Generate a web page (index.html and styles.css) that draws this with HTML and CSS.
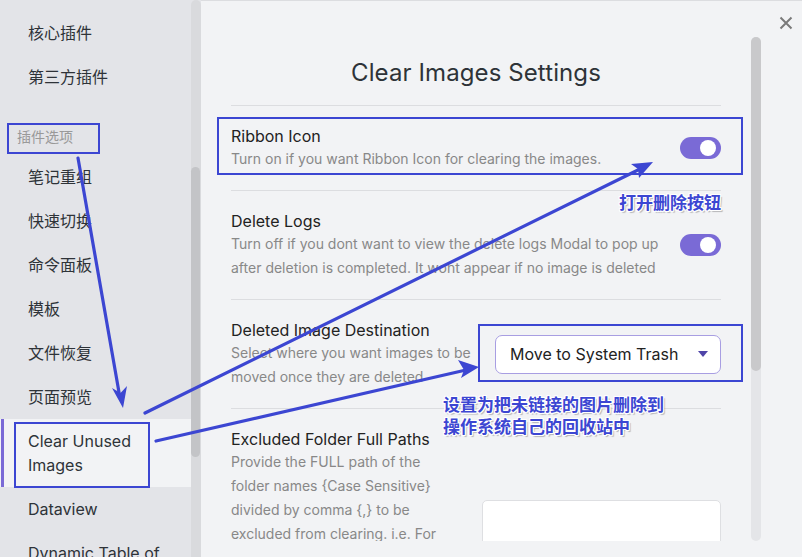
FILE: index.html
```html
<!DOCTYPE html>
<html lang="zh">
<head>
<meta charset="utf-8">
<title>Clear Images Settings</title>
<link rel="stylesheet" href="styles.css">
</head>
<body>
<div class="modal">
  <nav class="sidebar">
    <div class="nav-list">
      <div class="nav-item">核心插件</div>
      <div class="nav-item">第三方插件</div>
      <div class="nav-heading">插件选项</div>
      <div class="nav-item">笔记重组</div>
      <div class="nav-item">快速切换</div>
      <div class="nav-item">命令面板</div>
      <div class="nav-item">模板</div>
      <div class="nav-item">文件恢复</div>
      <div class="nav-item">页面预览</div>
      <div class="nav-item is-active">Clear Unused<br>Images</div>
      <div class="nav-item">Dataview</div>
      <div class="nav-item">Dynamic Table of</div>
    </div>
    <div class="side-track"><div class="side-thumb"></div></div>
  </nav>

  <main class="content">
    <div class="settings">
      <h2 class="title">Clear Images Settings</h2>

      <div class="setting-item">
        <div class="info">
          <div class="name">Ribbon Icon</div>
          <div class="desc">Turn on if you want Ribbon Icon for clearing the images.</div>
        </div>
        <div class="control"><div class="toggle"><span class="knob"></span></div></div>
      </div>

      <div class="setting-item">
        <div class="info">
          <div class="name">Delete Logs</div>
          <div class="desc">Turn off if you dont want to view the delete logs Modal to pop up after deletion is completed. It wont appear if no image is deleted</div>
        </div>
        <div class="control"><div class="toggle"><span class="knob"></span></div></div>
      </div>

      <div class="setting-item">
        <div class="info">
          <div class="name">Deleted Image Destination</div>
          <div class="desc">Select where you want images to be moved once they are deleted</div>
        </div>
        <div class="control">
          <div class="dropdown">
            <span>Move to System Trash</span>
            <span class="caret"></span>
          </div>
        </div>
      </div>

      <div class="setting-item item-textarea">
        <div class="info">
          <div class="name">Excluded Folder Full Paths</div>
          <div class="desc">Provide the FULL path of the folder names {Case Sensitive} divided by comma {,} to be excluded from clearing. i.e. For images under Personal/Files/Zodiac, Personal/Files/Zodiac should be used for exclusion</div>
        </div>
        <div class="control"><div class="textarea"></div></div>
      </div>
    </div>
    <div class="main-track"><div class="main-thumb"></div></div>
    <div class="close">
      <svg width="14" height="14" viewBox="0 0 14 14"><path d="M1.5 1.5L12.5 12.5M12.5 1.5L1.5 12.5" stroke="#7a7a7a" stroke-width="2" fill="none"/></svg>
    </div>
  </main>

  <div class="annotations">
    <div class="mark mark-heading"></div>
    <div class="mark mark-item"></div>
    <div class="mark mark-ribbon"></div>
    <div class="mark mark-dropdown"></div>
    <svg class="arrows" width="802" height="557" viewBox="0 0 802 557">
      <g stroke="#3c46d2" stroke-width="3.2" stroke-linecap="round" fill="none">
        <path d="M78 158L120 398"/>
        <path d="M145 413L640 169"/>
        <path d="M156 441L466 370"/>
      </g>
      <g fill="#3c46d2">
        <path d="M123 408L112 388L120.5 393L127 386Z"/>
        <path d="M653 162L631 164L638 169L639 178Z"/>
        <path d="M479 367L458 360L464 370L461 378Z"/>
      </g>
    </svg>
    <div class="label label-1">打开删除按钮</div>
    <div class="label label-2">设置为把未链接的图片删除到<br>操作系统自己的回收站中</div>
  </div>
</div>
</body>
</html>
```

FILE: styles.css
```css
* { box-sizing: border-box; }
html, body { margin: 0; padding: 0; }
body {
  width: 802px;
  height: 557px;
  overflow: hidden;
  font-family: Inter, "Noto Sans CJK SC", sans-serif;
  background: #f2f3f5;
  color: #2e3338;
}
.modal {
  position: relative;
  display: flex;
  width: 802px;
  height: 557px;
}

/* sidebar */
.sidebar {
  display: flex;
  width: 201px;
  height: 557px;
  background: #e3e4e8;
  flex: none;
}
.nav-list {
  width: 191px;
  padding-top: 11px;
  overflow: hidden;
}
.nav-item {
  padding: 10px 0 10px 28px;
  font-size: 16px;
  line-height: 24px;
  color: #2e3338;
  white-space: nowrap;
}
.nav-item.is-active {
  background: #f2f3f5;
  box-shadow: inset 4px 0 0 -1px #7a6ad6;
  border-left: 1px solid #f2f3f5;
  padding-left: 27px;
}
.nav-heading {
  padding: 29px 0 9px 17px;
  font-size: 14px;
  line-height: 18px;
  color: #999;
}
.side-track {
  width: 10px;
  height: 557px;
  background: #d9dadd;
  border-radius: 5px 5px 0 0;
  padding-top: 167px;
}
.side-thumb {
  width: 9px;
  height: 290px;
  background: #c3c4c7;
  border-radius: 5px;
}

/* main */
.content {
  position: relative;
  display: flex;
  align-items: flex-start;
  flex: 1;
  height: 557px;
  padding: 36px 0 16px 30px;
  border-top: 1px solid #dcdde0;
  background: #f2f3f5;
}
.settings {
  width: 490px;
  height: 505px;
  margin-top: -1px;
  overflow: hidden;
  flex: none;
}
.title {
  margin: 22px 0 17px;
  font-size: 24px;
  line-height: 30px;
  font-weight: 400;
  text-align: center;
  color: #2e3338;
  letter-spacing: 0.1px;
}
.setting-item {
  display: flex;
  align-items: center;
  padding: 19px 0;
  border-top: 1px solid #dcdde0;
}
.info {
  flex: 1;
  margin-right: 15px;
}
.name {
  font-size: 16px;
  line-height: 22px;
  color: #222;
}
.desc {
  font-size: 14px;
  line-height: 24px;
  color: #888;
}
.control {
  display: flex;
  justify-content: flex-end;
  flex: none;
}
.toggle {
  position: relative;
  width: 41px;
  height: 22px;
  border-radius: 11px;
  background: #7a6ad6;
}
.knob {
  position: absolute;
  right: 5px;
  top: 3px;
  width: 16px;
  height: 16px;
  border-radius: 50%;
  background: #fff;
}
.dropdown {
  display: flex;
  align-items: center;
  justify-content: space-between;
  width: 226px;
  height: 39px;
  padding: 0 12px 0 14px;
  background: #fff;
  border: 1px solid #a89ee2;
  border-radius: 7px;
  font-size: 16px;
  color: #222;
}
.caret {
  width: 0;
  height: 0;
  border-left: 5px solid transparent;
  border-right: 5px solid transparent;
  border-top: 6px solid #4f44a8;
}
.item-textarea { align-items: flex-start; }
.item-textarea .info { flex: 0 0 218px; margin-right: 0; }
.item-textarea .control { flex: 1; padding-top: 72px; }
.textarea {
  width: 239px;
  height: 120px;
  background: #fff;
  border: 1px solid #dedfe2;
  border-radius: 5px;
}
.main-track {
  margin-left: 30px;
  width: 10px;
  height: 504px;
  background: #e4e5e8;
  border-radius: 5px;
  flex: none;
}
.main-thumb {
  width: 10px;
  height: 334px;
  background: #c9c9cb;
  border-radius: 5px;
}
.close {
  position: absolute;
  top: 15px;
  right: 9px;
  width: 14px;
  height: 14px;
  line-height: 0;
}

/* annotations overlay */
.annotations {
  position: absolute;
  left: 0;
  top: 0;
  width: 802px;
  height: 557px;
  pointer-events: none;
}
.arrows { position: absolute; left: 0; top: 0; }
.mark {
  position: absolute;
  border: 2px solid #3c46d2;
}
.mark-heading { left: 7px; top: 123px; width: 93px; height: 31px; }
.mark-item { left: 14px; top: 422px; width: 136px; height: 66px; }
.mark-ribbon { left: 217px; top: 117px; width: 526px; height: 58px; }
.mark-dropdown { left: 478px; top: 324px; width: 265px; height: 58px; }
.label {
  position: absolute;
  font-family: "Noto Sans CJK SC", sans-serif;
  font-weight: 700;
  font-size: 17px;
  line-height: 22px;
  color: #3c46d2;
  white-space: nowrap;
  text-shadow:
    1px 0 0 #fff, -1px 0 0 #fff, 0 1px 0 #fff, 0 -1px 0 #fff,
    1px 1px 0 #fff, -1px -1px 0 #fff, 1px -1px 0 #fff, -1px 1px 0 #fff,
    2px 2px 1px rgba(0,0,0,0.25);
}
.label-1 { left: 619px; top: 191px; }
.label-2 { left: 443px; top: 393px; }
```
